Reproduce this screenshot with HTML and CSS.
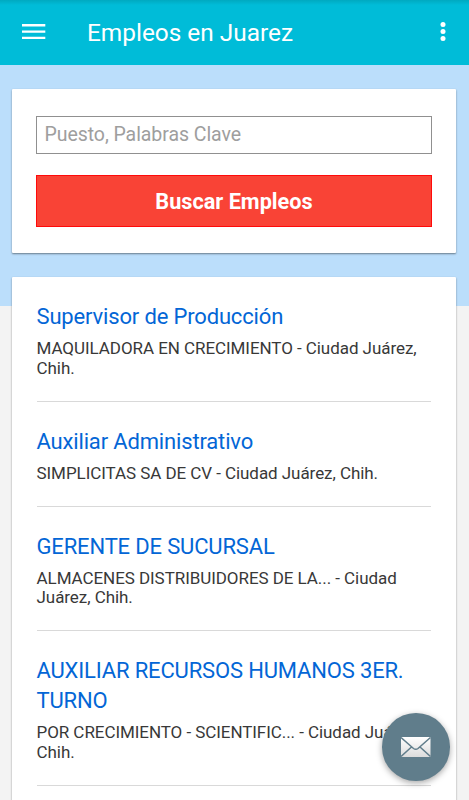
FILE: index.html
```html
<!DOCTYPE html>
<html lang="es">
<head>
    <meta charset="UTF-8">
    <meta name="viewport" content="width=device-width, initial-scale=1.0">
    <title>Empleos en Juarez</title>
    <link rel="stylesheet" href="styles.css">
</head>
<body>
    <header class="toolbar">
        <svg class="menu-icon" viewBox="0 0 24 17" width="24" height="17">
            <path d="M0 1.200h23.300M0 7.600h23.300M0 13.900h23.300" stroke="#fff" stroke-width="2.400"/>
        </svg>
        <h1>Empleos en Juarez</h1>
        <svg class="more-icon" viewBox="0 0 6 21" width="6" height="21" fill="#fff">
            <circle cx="3" cy="2.600" r="2.500"/>
            <circle cx="3" cy="9.500" r="2.500"/>
            <circle cx="3" cy="16.600" r="2.500"/>
        </svg>
    </header>
    <main class="content">
        <form class="card search">
            <input class="search-input" type="text" placeholder="Puesto, Palabras Clave">
            <button class="search-button" type="button">Buscar Empleos</button>
        </form>
        <div class="card jobs">
            <div class="job">
                <a class="job-title">Supervisor de Producción</a>
                <p class="job-company">MAQUILADORA EN CRECIMIENTO - Ciudad Juárez, Chih.</p>
            </div>
            <div class="job">
                <a class="job-title">Auxiliar Administrativo</a>
                <p class="job-company">SIMPLICITAS SA DE CV - Ciudad Juárez, Chih.</p>
            </div>
            <div class="job">
                <a class="job-title">GERENTE DE SUCURSAL</a>
                <p class="job-company">ALMACENES DISTRIBUIDORES DE LA... - Ciudad Juárez, Chih.</p>
            </div>
            <div class="job">
                <a class="job-title">AUXILIAR RECURSOS HUMANOS 3ER. TURNO</a>
                <p class="job-company">POR CRECIMIENTO - SCIENTIFIC... - Ciudad Juárez, Chih.</p>
            </div>
        </div>
    </main>
    <button class="mail-button" type="button">
        <svg viewBox="0 0 30 20" width="30" height="20">
            <defs>
                <linearGradient id="paper" x1="0" y1="0" x2="0" y2="1">
                    <stop offset="0" stop-color="#fff"/>
                    <stop offset="1" stop-color="#dcdcdc"/>
                </linearGradient>
            </defs>
            <rect width="29.500" height="20" rx=".5" fill="url(#paper)"/>
            <path d="M0 .5l12.500 11q2.250 1.700 4.500 0L29.500.5M0 19.500l10.500-9.500M29.500 19.500L19 10" fill="none" stroke="#607d8b" stroke-width="1.500"/>
        </svg>
    </button>
</body>
</html>
```
FILE: styles.css
```css
* {
    box-sizing: border-box;
}

body {
    margin: 0;
    height: 800px;
    overflow: hidden;
    background-color: #f3f3f3;
    font-family: Roboto, sans-serif;
}

.toolbar {
    display: flex;
    align-items: center;
    height: 65px;
    padding: 0 23.500px 0 22px;
    background: linear-gradient(#00a9c0, #00bcd8 5px);
    color: white;
}

.toolbar h1 {
    flex: 1;
    margin: 0 0 0 41px;
    font-size: 24.400px;
    font-weight: 400;
}

.content {
    display: flex;
    flex-direction: column;
    gap: 24px;
    padding: 24px 13px 0 12px;
    background: linear-gradient(#bbdefb, #bbdefb) no-repeat 0 0 / 100% 241px;
}

.card {
    background-color: white;
    border-radius: 1px;
    box-shadow: 0 1px 2px rgba(0, 0, 0, 0.45);
}

.search {
    display: flex;
    flex-direction: column;
    gap: 21px;
    height: 164px;
    padding: 27px 24px 0;
}

.search-input {
    height: 38px;
    padding: 0 7.500px 1px;
    border: 1px solid #909090;
    background-color: white;
    font-family: inherit;
    font-size: 19.500px;
    letter-spacing: -0.060px;
}

.search-input::placeholder {
    color: #9e9e9e;
}

.search-button {
    height: 52px;
    border: 1px solid #ff0a0a;
    background-color: #f94336;
    color: white;
    font-family: inherit;
    font-size: 21.700px;
    font-weight: 700;
}

.jobs {
    padding: 0 25px 40px 24.500px;
}

.job {
    padding: 25px 0 22.500px;
    border-bottom: 1px solid #d9d9d9;
}

.job-title {
    display: block;
    color: #0366d6;
    font-size: 22px;
    letter-spacing: -0.160px;
    line-height: 30px;
}

.job-company {
    margin: 7px 0 0;
    color: #383838;
    font-size: 17px;
    letter-spacing: -0.060px;
    line-height: 19.500px;
}

/* floating over the list */
.mail-button {
    position: absolute;
    right: 19.500px;
    bottom: 19.500px;
    display: flex;
    align-items: center;
    justify-content: center;
    width: 67.500px;
    height: 67.500px;
    padding: 0;
    border: none;
    border-radius: 50%;
    background-color: #607d8b;
    box-shadow: 0 2px 6px rgba(0, 0, 0, 0.35);
}
```
